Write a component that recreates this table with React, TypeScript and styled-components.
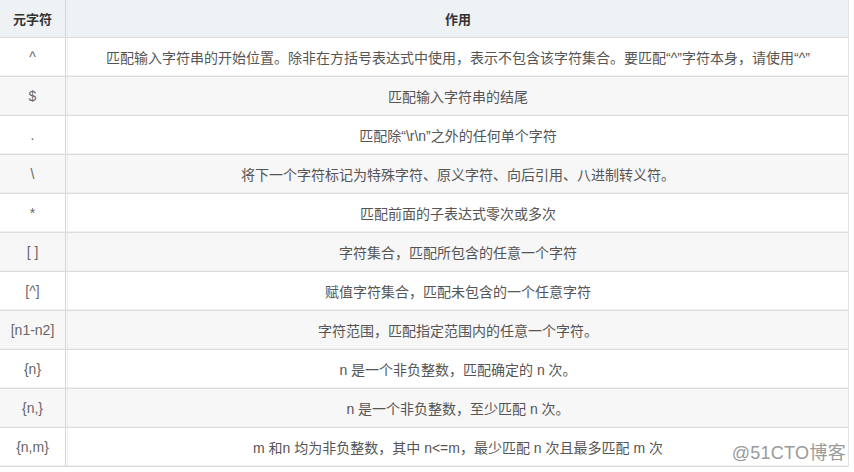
import React from "react";
import styled, { createGlobalStyle } from "styled-components";

const Global = createGlobalStyle`
  html, body { margin: 0; padding: 0; background: #fff; }
  body { font-family: "Liberation Sans", "Noto Sans CJK SC", sans-serif; }
`;

const Page = styled.div`
  position: relative;
  width: 854px;
  height: 472px;
  background: #fff;
  overflow: hidden;
`;

const Table = styled.div`
  width: 848px;
  border-right: 1px solid #e3e3e3;
  display: flex;
  flex-direction: column;
`;

const Row = styled.div<{ $bg: string; $h: number }>`
  display: grid;
  grid-template-columns: 66px 1fr;
  height: ${(p) => p.$h}px;
  background: ${(p) => p.$bg};
  border-bottom: 1px solid #dcdcdc;
  box-shadow: inset 0 -1px 0 #f0f0f0;
`;

const KeyCell = styled.div<{ $head?: boolean }>`
  display: flex;
  align-items: center;
  justify-content: center;
  border-right: 1px solid #d6d6d6;
  font-size: ${(p) => (p.$head ? 13 : 14)}px;
  color: ${(p) => (p.$head ? "#333" : "#666")};
  font-weight: ${(p) => (p.$head ? 700 : 400)};
  white-space: nowrap;
`;

const DescCell = styled.div<{ $head?: boolean }>`
  display: flex;
  align-items: center;
  justify-content: center;
  margin-left: 1px;
  border-left: 1px solid #ececec;
  font-size: ${(p) => (p.$head ? 13 : 14)}px;
  color: ${(p) => (p.$head ? "#333" : "#555")};
  font-weight: ${(p) => (p.$head ? 700 : 400)};
  white-space: nowrap;
`;

const Watermark = styled.div`
  position: absolute;
  right: 8px;
  bottom: 8px;
  font-size: 18px;
  color: #9a9a9a;
  letter-spacing: 0.3px;
  text-shadow: 0 0 2px #fff;
`;

const rows: [string, string][] = [
  ["^", "匹配输入字符串的开始位置。除非在方括号表达式中使用，表示不包含该字符集合。要匹配“^”字符本身，请使用“^”"],
  ["$", "匹配输入字符串的结尾"],
  [".", "匹配除“\\r\\n”之外的任何单个字符"],
  ["\\", "将下一个字符标记为特殊字符、原义字符、向后引用、八进制转义符。"],
  ["*", "匹配前面的子表达式零次或多次"],
  ["[ ]", "字符集合，匹配所包含的任意一个字符"],
  ["[^]", "赋值字符集合，匹配未包含的一个任意字符"],
  ["[n1-n2]", "字符范围，匹配指定范围内的任意一个字符。"],
  ["{n}", "n 是一个非负整数，匹配确定的 n 次。"],
  ["{n,}", "n 是一个非负整数，至少匹配 n 次。"],
  ["{n,m}", "m 和n 均为非负整数，其中 n<=m，最少匹配 n 次且最多匹配 m 次"],
];

export default function App() {
  return (
    <Page>
      <Global />
      <Table>
        <Row $bg="#eef2f5" $h={37}>
          <KeyCell $head>元字符</KeyCell>
          <DescCell $head>作用</DescCell>
        </Row>
        {rows.map(([k, d], i) => (
          <Row key={k} $bg={i % 2 === 0 ? "#ffffff" : "#f7f7f7"} $h={38}>
            <KeyCell>{k}</KeyCell>
            <DescCell>{d}</DescCell>
          </Row>
        ))}
      </Table>
      <Watermark>@51CTO博客</Watermark>
    </Page>
  );
}
